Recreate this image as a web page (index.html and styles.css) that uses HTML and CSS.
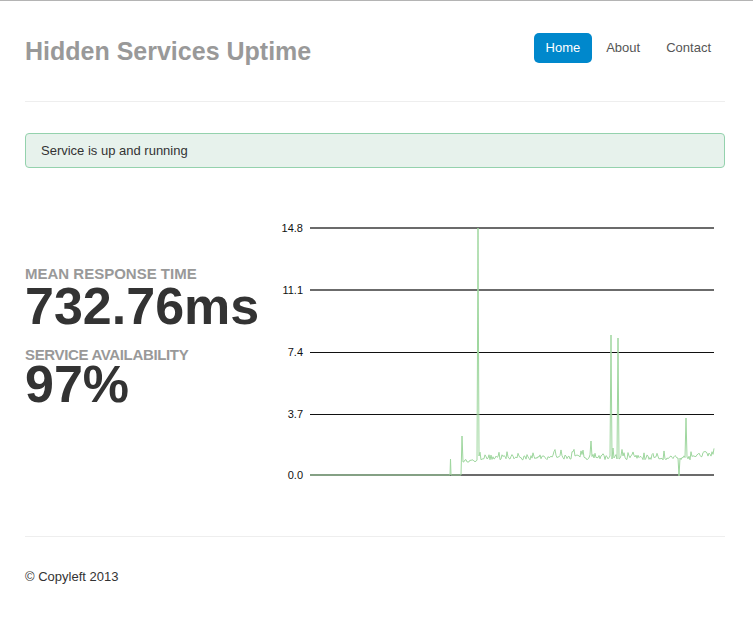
FILE: index.html
```html
<!DOCTYPE html>
<html lang="en">
<head>
<meta charset="utf-8">
<title>Hidden Services Uptime</title>
<link rel="stylesheet" href="styles.css">
</head>
<body>
<div class="container">
  <header class="masthead">
    <h3 class="brand">Hidden Services Uptime</h3>
    <ul class="nav">
      <li class="active"><a href="#">Home</a></li>
      <li><a href="#">About</a></li>
      <li><a href="#">Contact</a></li>
    </ul>
  </header>
  <hr class="rule">
  <div class="alert">Service is up and running</div>
  <div class="row">
    <div class="stats">
      <div class="label">Mean response time</div>
      <div class="value">732.76ms</div>
      <div class="label second">Service availability</div>
      <div class="value last">97%</div>
    </div>
    <svg class="chart" width="445" height="300" viewBox="0 0 445 300">
      <g class="axis-labels">
        <text x="23" y="32">14.8</text>
        <text x="23" y="94">11.1</text>
        <text x="23" y="156">7.4</text>
        <text x="23" y="218">3.7</text>
        <text x="23" y="279">0.0</text>
      </g>
      <line class="grid soft" x1="30" y1="28" x2="434" y2="28"></line>
      <line class="grid soft" x1="30" y1="90" x2="434" y2="90"></line>
      <line class="grid hard" x1="30" y1="152.5" x2="434" y2="152.5"></line>
      <line class="grid hard" x1="30" y1="214.5" x2="434" y2="214.5"></line>
      <line class="grid soft" x1="30" y1="275" x2="434" y2="275"></line>
      <polyline class="data" points=""></polyline>
    </svg>
  </div>
  <hr class="rule footer-rule">
  <footer class="footer">© Copyleft 2013</footer>
</div>
<script src="script.js"></script>
</body>
</html>
```

FILE: styles.css
```css
body {
  margin: 0;
  border-top: 1px solid #b4b4b4;
  font-family: "Liberation Sans", Arial, sans-serif;
  font-size: 13px;
  line-height: 18px;
  color: #333;
  background: #fff;
}

.container {
  width: 700px;
  margin-left: 25px;
  padding-top: 30px;
}

.masthead {
  display: flex;
  justify-content: space-between;
  height: 40px;
}

.brand {
  margin: 0;
  font-size: 25px;
  line-height: 40px;
  font-weight: bold;
  color: #999;
}

.nav {
  list-style: none;
  margin: 0;
  padding: 0;
  display: flex;
}

.nav a {
  display: block;
  padding: 8px 12px;
  line-height: 14px;
  margin: 2px 2px 2px 0;
  border-radius: 5px;
  color: #555;
  text-decoration: none;
}

.nav .active a {
  background: #0088cc;
  color: #fff;
}

.rule {
  border: 0;
  border-top: 1px solid #eee;
  margin: 30px 0 0;
  height: 0;
}

.alert {
  margin-top: 31px;
  padding: 8px 15px 7px;
  border: 1px solid #94d2ad;
  border-radius: 4px;
  background: #e7f2ec;
  color: #333;
}

.row {
  display: flex;
  margin-top: 32px;
}

.stats {
  width: 255px;
  padding-top: 66px;
}

.label {
  font-size: 15px;
  line-height: 15px;
  font-weight: bold;
  color: #999;
  text-transform: uppercase;
}

.label.second {
  margin-top: 19px;
  letter-spacing: -0.35px;
}

.value {
  margin-top: 3px;
  font-size: 52px;
  line-height: 44px;
  font-weight: bold;
  color: #333;
}

.value.last {
  margin-top: 0;
}

.chart {
  display: block;
  width: 445px;
  height: 300px;
}

.axis-labels text {
  font-family: "Liberation Sans", Arial, sans-serif;
  font-size: 11px;
  fill: #111;
  text-anchor: end;
}

.grid.soft {
  stroke: #6b6b6b;
  stroke-width: 2;
}

.grid.hard {
  stroke: #111;
  stroke-width: 1;
}

.data {
  fill: none;
  stroke: #9fd79f;
  stroke-width: 1;
}

.footer-rule {
  margin-top: 36px;
}

.footer {
  padding-top: 31px;
}
```

FILE: script.js
```js
(function () {
  var line = document.querySelector('.chart .data');
  var seed = 12345;
  function rnd() {
    seed = (seed * 16807) % 2147483647;
    return (seed - 1) / 2147483646;
  }
  var pts = [];
  function P(px, py) {
    pts.push((px - 280) + ',' + (py - 200));
  }
  P(310, 475);
  P(450, 475);
  P(450.5, 459);
  P(451, 475);
  P(461, 475);
  P(462, 436);
  P(463, 462);
  var x;
  for (x = 464; x <= 477; x++) {
    P(x, 462 - rnd() * 2.5);
  }
  P(478, 228);
  P(479, 456);
  var special = {
    591: 441, 610: 456, 611: 335, 612: 459, 613: 448, 614: 458,
    617: 459, 618: 338, 619: 459, 678: 458, 679: 476, 680: 458,
    686: 418, 687: 457
  };
  for (x = 480; x <= 714; x++) {
    if (special[x] !== undefined) {
      P(x, special[x]);
      continue;
    }
    var base = x > 690 ? 457 : 460;
    var y = base - rnd() * 5.5;
    if (rnd() < 0.2) {
      y -= rnd() * 7;
    }
    P(x, y);
  }
  line.setAttribute('points', pts.join(' '));
})();
```
